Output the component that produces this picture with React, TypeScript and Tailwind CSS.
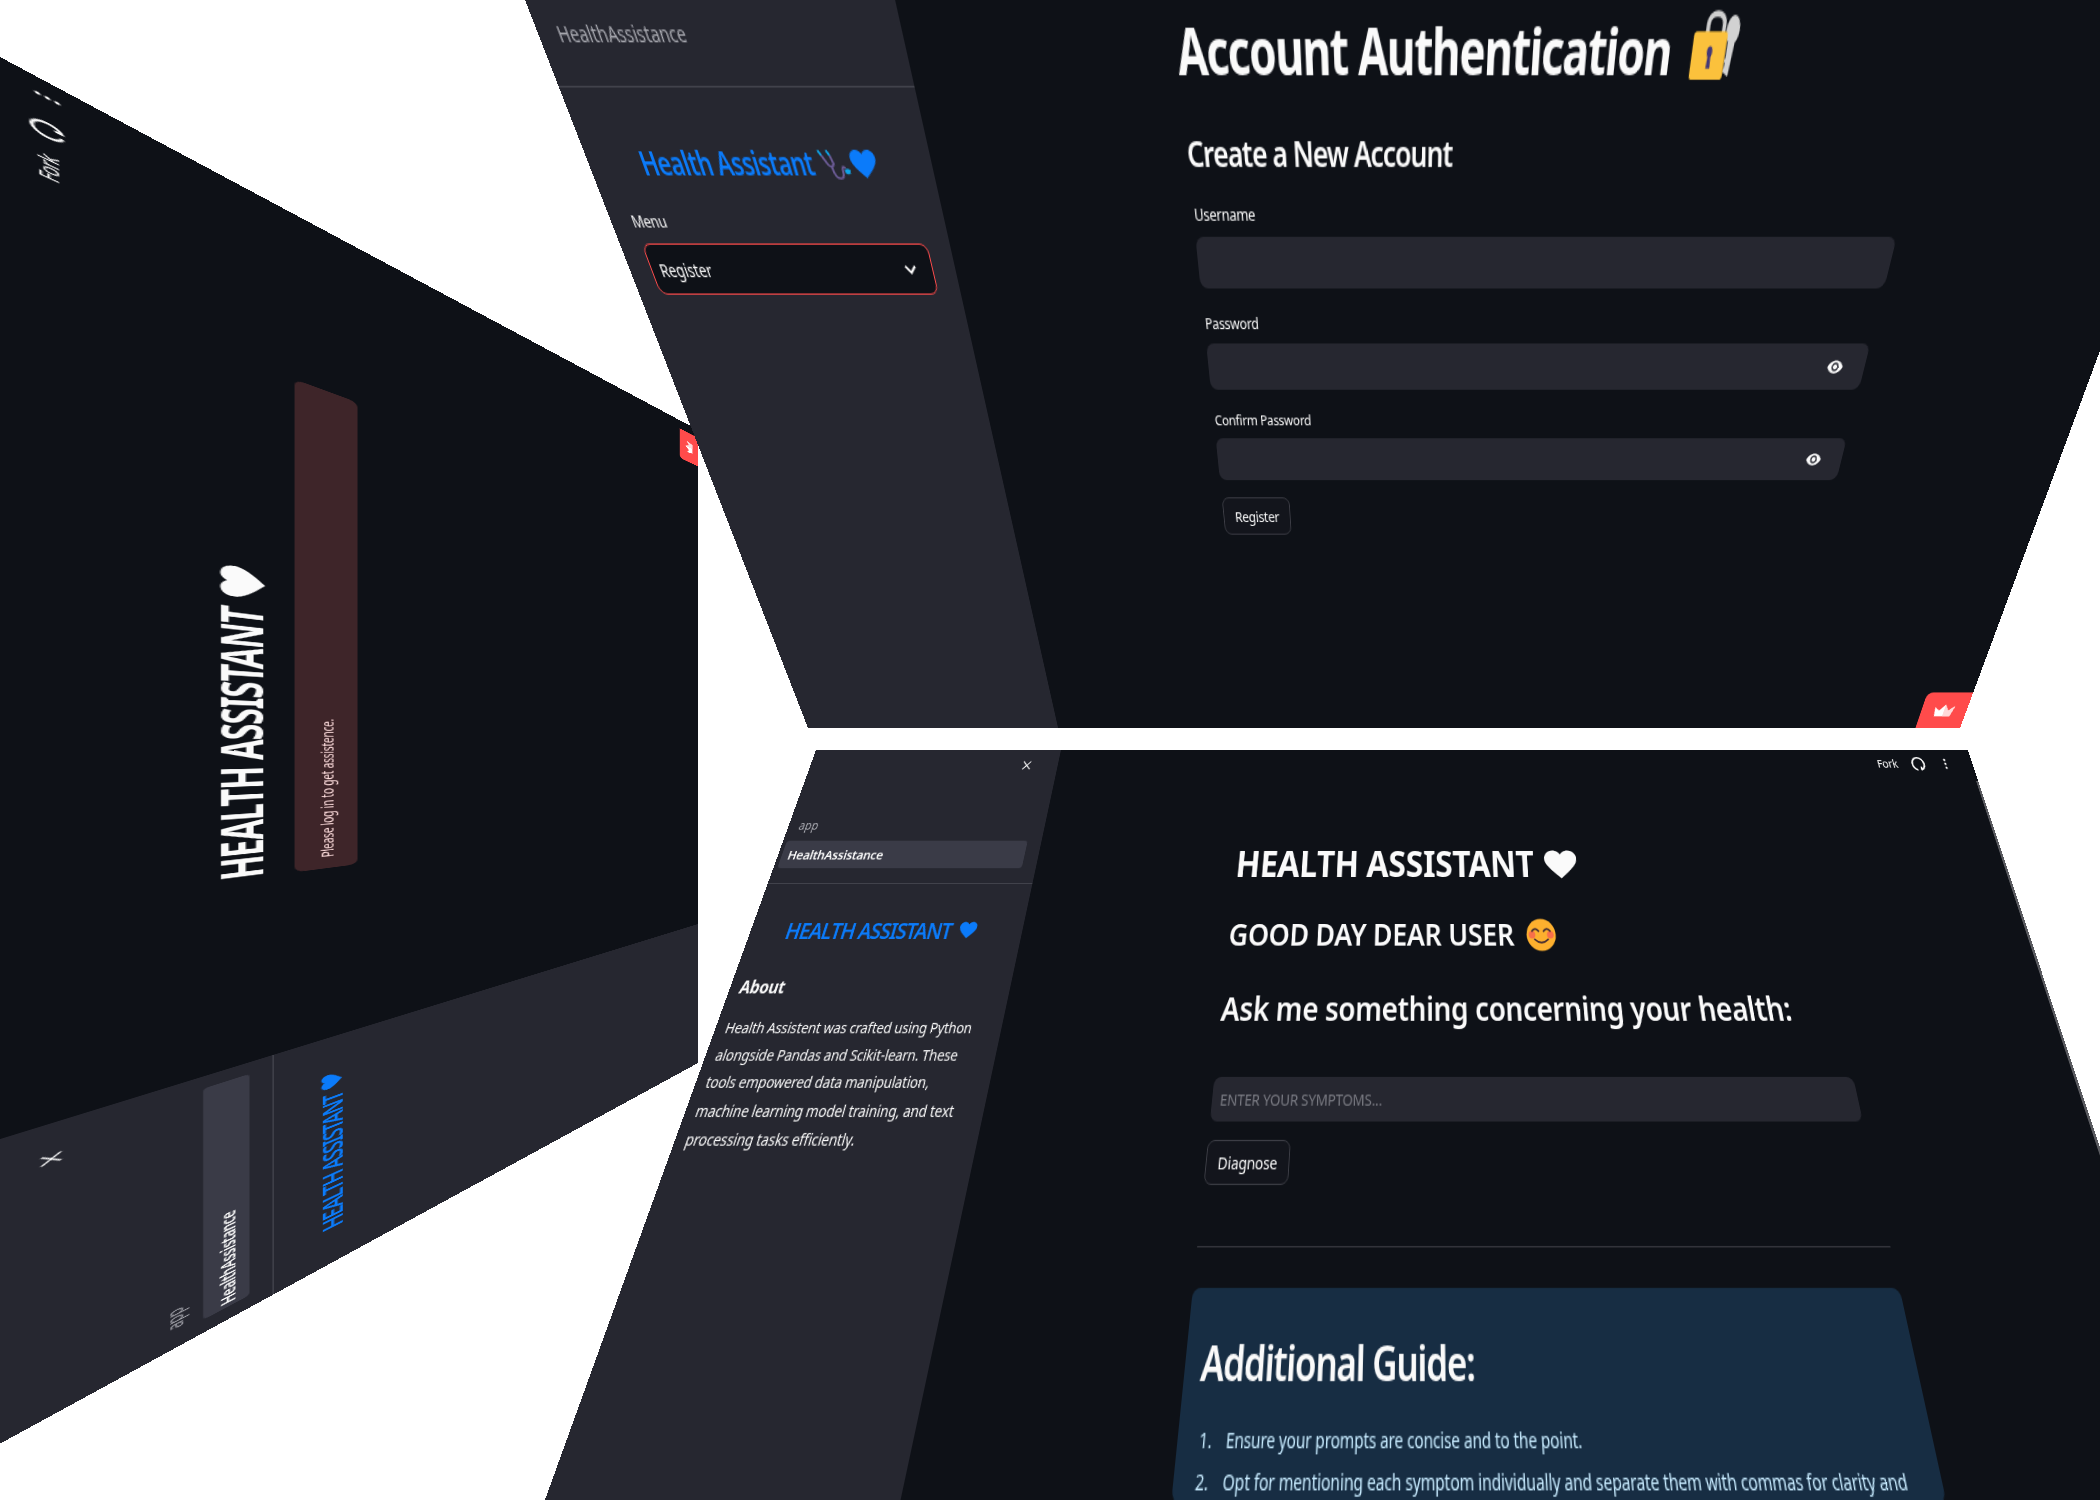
import React from "react";

type Pt = [number, number];

// maps a flat w x h box onto four screen corners (tl, tr, br, bl)
function quad(w: number, h: number, [p0, p1, p2, p3]: Pt[]) {
  const dx1 = p1[0] - p2[0];
  const dx2 = p3[0] - p2[0];
  const dx3 = p0[0] - p1[0] + p2[0] - p3[0];
  const dy1 = p1[1] - p2[1];
  const dy2 = p3[1] - p2[1];
  const dy3 = p0[1] - p1[1] + p2[1] - p3[1];
  const den = dx1 * dy2 - dx2 * dy1;
  const g = (dx3 * dy2 - dx2 * dy3) / den;
  const k = (dx1 * dy3 - dx3 * dy1) / den;
  const a = p1[0] - p0[0] + g * p1[0];
  const b = p3[0] - p0[0] + k * p3[0];
  const d = p1[1] - p0[1] + g * p1[1];
  const e = p3[1] - p0[1] + k * p3[1];
  return `matrix3d(${a / w},${d / w},0,${g / w},${b / h},${e / h},0,${k / h},0,0,1,0,${p0[0]},${p0[1]},0,1)`;
}

const HEART =
  "M12 21C5 15 1 11 1 7C1 3.5 3.5 1 7 1C9 1 11 2 12 4C13 2 15 1 17 1C20.5 1 23 3.5 23 7C23 11 19 15 12 21Z";

function Heart({ className, fill }: { className: string; fill: string }) {
  return (
    <svg viewBox="0 0 24 22" preserveAspectRatio="none" className={className}>
      <path d={HEART} fill={fill} />
    </svg>
  );
}

function LockKey() {
  return (
    <svg viewBox="0 0 50 43" preserveAspectRatio="none" className="ml-[18px] h-[44px] w-[43px] shrink-0 -translate-y-[4px]">
      <ellipse cx="42" cy="12" rx="7" ry="9" fill="#d2d2d2" />
      <path d="M38 16h8l-3 25-6-3 1-5-1-2 1-2z" fill="#d2d2d2" />
      <path d="M15 15V9c0-9 17-9 17 0v7" fill="none" stroke="#cfcfcf" strokeWidth="4" />
      <rect x="1" y="13" width="36" height="30" rx="3" fill="#fbc13c" />
      <path d="M20 22c2.600 0 3.400 3 2.600 5l-1 2 .6 7h-4.400l.6-7-1-2c-.8-2 0-5 2.600-5z" fill="#433878" />
    </svg>
  );
}

function Stethoscope() {
  return (
    <svg viewBox="20 48 100 105" preserveAspectRatio="none" className="ml-[5px] h-[23px] w-[31px] shrink-0">
      <path d="M36 70L50 100Q60 114 68 98L62 70" fill="none" stroke="#6b5b95" strokeWidth="7" />
      <path d="M60 106Q62 145 80 145Q92 145 92 120Q92 100 102 112" fill="none" stroke="#6b5b95" strokeWidth="7" />
      <path d="M28 54L36 70M54 54L62 70" fill="none" stroke="#0ea5e9" strokeWidth="7" />
      <circle cx="107" cy="122" r="9" fill="#0ea5e9" />
    </svg>
  );
}

function Smile() {
  return (
    <svg viewBox="0 0 36 36" preserveAspectRatio="none" className="ml-[15px] h-[35px] w-[37px] shrink-0">
      <circle cx="18" cy="18" r="17.500" fill="#fdb02e" />
      <circle cx="7" cy="18" r="4" fill="#f8704a" />
      <circle cx="29" cy="18" r="4" fill="#f8704a" />
      <path d="M7 14q4-5 8 0M21 14q4-5 8 0M10 23q8 7 16 0" fill="none" stroke="#402a32" strokeWidth="2" strokeLinecap="round" />
    </svg>
  );
}

function Eye({ className }: { className: string }) {
  return (
    <svg viewBox="0 0 24 24" className={className} fill="#fafafa">
      <path d="M12 4.500C7 4.500 2.730 7.610 1 12c1.730 4.390 6 7.500 11 7.500s9.270-3.110 11-7.500c-1.730-4.390-6-7.500-11-7.500zM12 17c-2.760 0-5-2.240-5-5s2.240-5 5-5 5 2.240 5 5-2.240 5-5 5zm0-8c-1.660 0-3 1.340-3 3s1.340 3 3 3 3-1.340 3-3-1.340-3-3-3z" />
    </svg>
  );
}

function Badge({ place }: { place: string }) {
  return (
    <div className={`absolute bottom-0 flex items-center justify-center rounded-tl-lg bg-[#ff4b4b] ${place}`}>
      <svg viewBox="0 0 24 16" className="h-[18px] w-[26px]">
        <path d="M2 15L0 4l6 4 6-7 5 7 7-5-3 12z" fill="#fff" />
        <path d="M12 15V1l5 7 7-5-3 12z" fill="#ffd9d9" />
      </svg>
    </div>
  );
}

function Toolbar({ padRight }: { padRight: string }) {
  return (
    <div className={`flex h-[24px] items-center justify-end text-[14px] text-[#fafafa] ${padRight}`}>
      <span className="tracking-[-0.02em]">Fork</span>
      <svg viewBox="0 0 24 24" fill="none" stroke="#fafafa" strokeWidth="3" strokeLinecap="round" strokeLinejoin="round" className="ml-[19px] h-[18px] w-[18px]">
        <path d="M8 22c-4-1.500-6.500-5.500-6.500-10a10.500 10.500 0 0 1 21 0c0 4.500-2.500 8.500-6.500 10v-4" />
      </svg>
      <svg viewBox="0 0 16 16" fill="#fafafa" className="ml-[20px] h-[16px] w-[16px]">
        <circle cx="8" cy="3" r="1.500" />
        <circle cx="8" cy="8" r="1.500" />
        <circle cx="8" cy="13" r="1.500" />
      </svg>
    </div>
  );
}

type NavProps = {
  closePad: string;
  appRow: string;
  activeRow: string;
  titleRow: string;
};

function PagesNav({ closePad, appRow, activeRow, titleRow }: NavProps) {
  return (
    <>
      <div className={`flex h-[20px] justify-end pt-[2px] ${closePad}`}>
        <svg viewBox="0 0 16 16" stroke="#fafafa" strokeWidth="1.400" className="h-[16px] w-[16px]">
          <path d="M3 3l10 10M13 3L3 13" />
        </svg>
      </div>
      <div className={`flex h-[20px] items-center text-[14px] text-[#a3a4ab] ${appRow}`}>app</div>
      <div className={`mt-[9px] flex h-[32px] items-center rounded-[4px] bg-[#3a3b47] text-[15px] font-semibold tracking-[-0.015em] text-[#fafafa] ${activeRow}`}>
        HealthAssistance
      </div>
      <div className="mt-[17px] h-px bg-[#45464f]" />
      <div className={`flex h-[33px] items-center text-[24px] font-semibold text-[#0b7bfa] ${titleRow}`}>
        HEALTH ASSISTANT
        <Heart className="ml-[8px] h-[19px] w-[23px] shrink-0" fill="#0b7bfa" />
      </div>
    </>
  );
}

function Headline({ row }: { row: string }) {
  return (
    <h1 className={`flex h-[48px] items-center text-[41px] font-bold text-[#fafafa] ${row}`}>
      HEALTH ASSISTANT
      <Heart className="ml-[12px] h-[35px] w-[45px] shrink-0" fill="#fafafa" />
    </h1>
  );
}

function LoginWindow() {
  return (
    <div
      className="absolute left-0 top-0 flex h-[716px] w-[1530px] origin-top-left overflow-hidden bg-[#0e1117]"
      style={{ transform: quad(1530, 716, [[0, 1443.6], [0, 57], [698, 430], [698, 1063]]) }}
    >
      <aside className="w-[336px] shrink-0 bg-[#262730] pt-[15px]">
        <PagesNav
          closePad="pr-[33px]"
          appRow="mt-[49px] pl-[24px]"
          activeRow="ml-[17px] w-[303px] pl-[4px]"
          titleRow="mt-[30px] pl-[50px] tracking-[-0.06em]"
        />
      </aside>
      <main className="relative flex-1 pt-[11px]">
        <Toolbar padRight="pr-[10px]" />
        <div className="pl-[252px]">
          <Headline row="mt-[81px] tracking-[-0.03em]" />
          <div className="mt-[15px] flex h-[53px] w-[706px] items-center rounded-lg bg-[#3e2529] pl-[16px] text-[15px] tracking-[-0.02em] text-[#ffdede]">
            Please log in to get assistence.
          </div>
        </div>
        <Badge place="right-[19px] h-[40px] w-[69px]" />
      </main>
    </div>
  );
}

function Field({ label, gap, secret }: { label: string; gap: string; secret?: boolean }) {
  return (
    <>
      <label className="ml-[1px] flex h-[20px] items-center text-[13px] tracking-[-0.02em] text-[#fafafa]">{label}</label>
      <div className={`flex h-[40px] items-center justify-end rounded-lg bg-[#262730] pr-[23px] ${gap}`}>
        {secret && <Eye className="h-[18px] w-[18px]" />}
      </div>
    </>
  );
}

function RegisterWindow() {
  return (
    <div
      className="absolute left-0 top-0 flex h-[651px] w-[1548px] origin-top-left overflow-hidden bg-[#0e1117]"
      style={{ transform: quad(1548, 651, [[525, 0], [2230, 0], [1960, 728], [808, 728]]) }}
    >
      <aside className="w-[336px] shrink-0 bg-[#262730] pt-[10px]">
        <div className="flex h-[20px] items-center pl-[18px] text-[15px] tracking-[-0.01em] text-[#a8a9b0]">HealthAssistance</div>
        <div className="mt-[24px] h-px bg-[#45464f]" />
        <div className="mt-[36px] flex h-[32px] items-center pl-[51px] text-[22.500px] font-semibold tracking-[-0.03em] text-[#0b7bfa]">
          Health Assistant
          <Stethoscope />
          <Heart className="h-[22px] w-[27px] shrink-0" fill="#0b7bfa" />
        </div>
        <div className="ml-[21px] mt-[16px] flex h-[20px] items-center text-[13px] tracking-[-0.02em] text-[#fafafa]">Menu</div>
        <div className="ml-[22px] mt-[6px] flex h-[40px] w-[291px] items-center justify-between rounded-lg border border-[#ff4b4b] bg-[#0e1117] pl-[8px] pr-[14px] text-[14px] tracking-[-0.01em] text-[#fafafa]">
          Register
          <svg viewBox="0 0 16 16" fill="none" stroke="#fafafa" strokeWidth="2" className="h-[16px] w-[16px]">
            <path d="M3 5.500l5 5 5-5" />
          </svg>
        </div>
      </aside>
      <main className="relative flex-1 pl-[251px] pt-[8px]">
        <h1 className="flex h-[48px] items-center text-[41px] font-bold tracking-[-0.03em] text-[#fafafa]">
          Account Authentication
          <LockKey />
        </h1>
        <h3 className="mt-[24px] flex h-[38px] items-center text-[26px] font-semibold tracking-[-0.04em] text-[#fafafa]">Create a New Account</h3>
        <div className="w-[712px]">
          <div className="mt-[16px]">
            <Field label="Username" gap="mt-[6px]" />
          </div>
          <div className="mt-[19px]">
            <Field label="Password" gap="mt-[6px]" secret />
          </div>
          <div className="mt-[18px]">
            <Field label="Confirm Password" gap="mt-[6px]" secret />
          </div>
        </div>
        <button type="button" className="mt-[17px] h-[38px] w-[79px] rounded-lg border border-[#3d3e46] bg-[#13151c] text-[14px] tracking-[-0.02em] text-[#fafafa]">
          Register
        </button>
        <Badge place="right-0 h-[46px] w-[60px]" />
      </main>
    </div>
  );
}

const ABOUT = [
  "Health Assistent was crafted using Python",
  "alongside Pandas and Scikit-learn. These",
  "tools empowered data manipulation,",
  "machine learning model training, and text",
  "processing tasks efficiently.",
];

function DiagnoseWindow() {
  return (
    <div
      className="absolute left-0 top-0 flex h-[679px] w-[1580px] origin-top-left overflow-hidden bg-[#0e1117]"
      style={{ transform: quad(1580, 679, [[816, 750], [1968, 750], [2217, 1500], [545, 1500]]) }}
    >
      <aside className="w-[336px] shrink-0 bg-[#262730] pt-[10px]">
        <PagesNav
          closePad="pr-[34px]"
          appRow="mt-[54px] pl-[14px]"
          activeRow="ml-[5px] w-[313px] pl-[8px]"
          titleRow="mt-[34px] pl-[44px] tracking-[-0.05em]"
        />
        <h4 className="mt-[30px] flex h-[24px] items-center pl-[12px] text-[18px] font-bold tracking-[-0.01em] text-[#fafafa]">About</h4>
        <div className="mt-[16px] pl-[12px] text-[15px] leading-[25.6px] tracking-[-0.01em] text-[#fafafa]">
          {ABOUT.map((line) => (
            <p key={line}>{line}</p>
          ))}
        </div>
      </aside>
      <main className="relative flex flex-1 flex-col pt-[7px]">
        <Toolbar padRight="pr-[29px]" />
        <div className="flex flex-1 flex-col pl-[256px]">
          <Headline row="mt-[88px] tracking-[-0.01em]" />
          <h2 className="mt-[34px] flex h-[40px] items-center text-[33px] font-semibold tracking-[-0.01em] text-[#fafafa]">
            GOOD DAY DEAR USER
            <Smile />
          </h2>
          <h3 className="mt-[36px] flex h-[40px] items-center text-[33px] font-semibold tracking-[-0.012em] text-[#fafafa]">
            Ask me something concerning your health:
          </h3>
          <div className="mt-[45px] flex h-[40px] w-[732px] items-center rounded-lg bg-[#262730] pl-[9px] text-[15px] tracking-[-0.01em] text-[#7a7b83]">
            ENTER YOUR SYMPTOMS...
          </div>
          <button type="button" className="mt-[16px] h-[38px] w-[92px] rounded-lg border border-[#3d3e46] bg-[#13151c] text-[15px] tracking-[-0.01em] text-[#fafafa]">
            Diagnose
          </button>
          <div className="mt-[49px] h-px w-[732px] bg-[#3a3b42]" />
          <section className="mt-[31px] w-[732px] flex-1 rounded-lg bg-[#172d43] pl-[16px] pt-[34px]">
            <h2 className="flex h-[40px] items-center text-[35px] font-semibold tracking-[-0.035em] text-[#fafafa]">Additional Guide:</h2>
            <ol className="mt-[18px] text-[15px] tracking-[-0.01em] text-[#c7ebff]">
              <li className="flex h-[28px] items-center whitespace-nowrap pl-[5px]">
                <span className="w-[26px] shrink-0">1.</span>
                Ensure your prompts are concise and to the point.
              </li>
              <li className="flex h-[27px] items-center whitespace-nowrap pl-[5px]">
                <span className="w-[26px] shrink-0">2.</span>
                Opt for mentioning each symptom individually and separate them with commas for clarity and
              </li>
            </ol>
          </section>
        </div>
        <div className="absolute bottom-0 right-0 top-[40px] w-[3px] bg-[#5a5b60]" />
      </main>
    </div>
  );
}

export default function App() {
  return (
    <div className="relative h-[1500px] w-[2100px] overflow-hidden bg-white font-['Noto_Sans',sans-serif]">
      <LoginWindow />
      <RegisterWindow />
      <DiagnoseWindow />
    </div>
  );
}
